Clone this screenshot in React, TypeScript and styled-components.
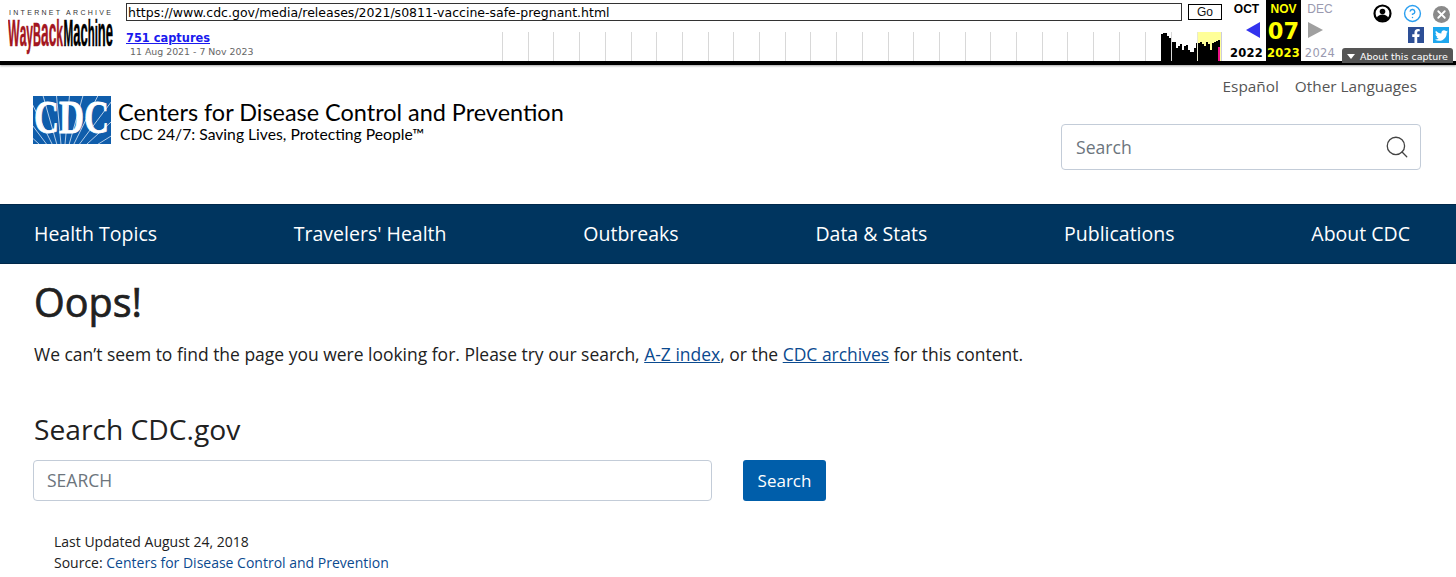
import styled, { createGlobalStyle } from 'styled-components';
import { Search as SearchIcon, X, HelpCircle } from 'lucide-react';
import { FaFacebookF, FaTwitter } from 'react-icons/fa';

const GlobalStyle = createGlobalStyle`
  html, body {
    margin: 0;
    padding: 0;
    background: #fff;
    overflow: hidden;
  }
  body {
    font-family: 'Open Sans', sans-serif;
    color: #212121;
  }
  * {
    box-sizing: border-box;
  }
`;

const Page = styled.div`
  width: 1456px;
  height: 577px;
  overflow: hidden;
`;

/* wayback toolbar */
const Toolbar = styled.div`
  position: relative;
  display: flex;
  height: 65px;
  background: #fff;
  border-bottom: 4px solid #000;
  box-shadow: 0 1px 2px rgba(0, 0, 0, 0.35);
  font-family: 'DejaVu Sans', sans-serif;
`;

const LogoLink = styled.div`
  width: 126px;
  flex: none;
  padding: 9px 0 0 8px;
`;

const Center = styled.div`
  width: 1101px;
  flex: none;
  display: flex;
  flex-direction: column;
  padding-top: 3px;
`;

const UrlRow = styled.div`
  display: flex;
  gap: 6px;
`;

const UrlInput = styled.div`
  width: 1056px;
  height: 18px;
  border: 1px solid #333;
  padding-left: 1px;
  font-size: 12.5px;
  line-height: 18px;
  color: #000;
  white-space: nowrap;
`;

const GoButton = styled.div`
  width: 34px;
  height: 16px;
  margin-top: 1px;
  border: 1px solid #000;
  font-family: 'Liberation Sans', sans-serif;
  font-size: 12px;
  line-height: 14px;
  text-align: center;
  color: #111;
`;

const CaptureRow = styled.div`
  display: flex;
`;

const CaptureInfo = styled.div`
  width: 376px;
  flex: none;
  padding-top: 10px;
`;

const CaptureLink = styled.a`
  display: block;
  font-size: 11.4px;
  font-weight: 700;
  line-height: 14px;
  color: #1a1aee;
  text-decoration: underline;
`;

const CaptureDates = styled.div`
  margin: 1px 0 0 4px;
  font-size: 9.4px;
  line-height: 12px;
  color: #666;
`;

const SparkWrap = styled.div`
  margin-top: 11px;
  line-height: 0;
`;

const Months = styled.div`
  display: flex;
  flex: none;
`;

const Month = styled.div<{ $width: number; $current?: boolean; $muted?: boolean }>`
  width: ${(p) => p.$width}px;
  height: 61px;
  display: flex;
  flex-direction: column;
  align-items: center;
  background: ${(p) => (p.$current ? '#000' : 'transparent')};
  color: ${(p) => (p.$current ? '#ff0' : p.$muted ? '#9a9ab0' : '#000')};
  font-family: 'Liberation Sans', sans-serif;
`;

const MonthName = styled.div<{ $weight?: number }>`
  height: 18px;
  padding-top: 1px;
  font-size: 12px;
  line-height: 16px;
  font-weight: ${(p) => p.$weight ?? 700};
`;

const Day = styled.div`
  height: 28px;
  font-family: 'DejaVu Sans', sans-serif;
  font-size: 22.5px;
  font-weight: 700;
  line-height: 26px;
`;

const Arrow = styled.div<{ $dir: 'left' | 'right' }>`
  width: 0;
  height: 0;
  margin-top: 4px;
  margin-bottom: 8px;
  margin-left: ${(p) => (p.$dir === 'left' ? '13px' : '0')};
  margin-right: ${(p) => (p.$dir === 'right' ? '9px' : '0')};
  border-top: 8px solid transparent;
  border-bottom: 8px solid transparent;
  ${(p) =>
    p.$dir === 'left'
      ? 'border-right: 14px solid #3333ee;'
      : 'border-left: 15px solid #a0a0a0;'}
`;

const Year = styled.div<{ $muted?: boolean }>`
  line-height: 14px;
  letter-spacing: 0.3px;
  font-weight: ${(p) => (p.$muted ? 400 : 700)};
  font-family: 'DejaVu Sans', sans-serif;
  font-size: 11.5px;
`;

const Tools = styled.div`
  flex: 1;
  display: flex;
  flex-direction: column;
  align-items: flex-end;
  padding: 4px 5px 0 0;
  gap: 4px;
`;

const ToolRow = styled.div`
  display: flex;
  align-items: center;
  gap: 10.5px;
`;

const RoundIcon = styled.div<{ $bg: string }>`
  width: 17px;
  height: 17px;
  margin: 2px 1px 0;
  border-radius: 50%;
  display: flex;
  align-items: center;
  justify-content: center;
  background: ${(p) => p.$bg};
  color: #fff;
`;

const PlainIcon = styled.div`
  width: 19px;
  height: 19px;
  display: flex;
  align-items: center;
  justify-content: center;
  color: #2b9ff0;
`;

const ShareRow = styled.div`
  display: flex;
  gap: 9px;
  margin-right: 2px;
`;

const ShareSquare = styled.div<{ $bg: string }>`
  width: 16px;
  height: 16px;
  display: flex;
  align-items: flex-end;
  justify-content: center;
  background: ${(p) => p.$bg};
  color: #fff;
`;

const ShareTwitter = styled(ShareSquare)`
  align-items: center;
`;

const AboutTab = styled.div`
  position: absolute;
  left: 1342px;
  top: 48px;
  width: 111px;
  height: 15px;
  display: flex;
  align-items: center;
  gap: 5px;
  padding: 1px 0 0 5px;
  border-radius: 3px 3px 0 0;
  background: #555;
  color: #fff;
  font-family: 'DejaVu Sans', sans-serif;
  font-size: 9.5px;
  white-space: nowrap;
`;

const AboutCaret = styled.span`
  width: 0;
  height: 0;
  border-left: 4px solid transparent;
  border-right: 4px solid transparent;
  border-top: 5px solid #fff;
`;

/* site header */
const Header = styled.header`
  height: 139px;
  padding: 31px 35px 0 33px;
  display: flex;
  justify-content: space-between;
`;

const Logo = styled.div`
  display: flex;
  gap: 7px;
`;

const LogoText = styled.div`
  padding-top: 3px;
  color: #000;
  font-family: 'Lato', sans-serif;
`;

const LogoTitle = styled.div`
  font-size: 23.45px;
  line-height: 26px;
  white-space: nowrap;
`;

const LogoTagline = styled.div`
  margin: 1px 0 0 2px;
  font-size: 15.7px;
  line-height: 17px;
  white-space: nowrap;
`;

const HeaderRight = styled.div`
  width: 360px;
  margin-top: -21px;
  display: flex;
  flex-direction: column;
`;

const LangLinks = styled.div`
  display: flex;
  justify-content: flex-end;
  gap: 16px;
  padding-right: 4px;
  font-size: 15.35px;
  line-height: 22px;
  color: #555;
`;

const SiteSearch = styled.div`
  height: 46px;
  margin-top: 27px;
  padding: 0 10px 0 14px;
  display: flex;
  align-items: center;
  justify-content: space-between;
  border: 1px solid #c3ccd8;
  border-radius: 4px;
  font-size: 17.6px;
  color: #6c757d;
  svg {
    color: #444;
  }
`;

/* nav */
const Nav = styled.nav`
  height: 60px;
  padding: 0 46px 2px 34px;
  display: flex;
  align-items: center;
  justify-content: space-between;
  background: #00355f;
  border-top: 1px solid #00284a;
  border-bottom: 1px solid #00284a;
  color: #fff;
  font-size: 19.5px;
`;

/* page content */
const Main = styled.main`
  padding: 14px 0 0 34px;
`;

const Title = styled.h1`
  margin: 0;
  font-size: 39.5px;
  font-weight: 500;
  line-height: 48px;
  color: #212121;
  -webkit-text-stroke: 0.7px #212121;
`;

const Lead = styled.p`
  margin: 15px 0 0;
  font-size: 17.48px;
  line-height: 26px;
  color: #212121;
`;

const TextLink = styled.a`
  color: #0b4a8f;
  text-decoration: underline;
`;

const SubTitle = styled.h2`
  margin: 44px 0 0;
  font-size: 28.2px;
  font-weight: 400;
  line-height: 36px;
  color: #212121;
`;

const SearchRow = styled.div`
  display: flex;
  gap: 31px;
  margin-top: 13px;
  margin-left: -1px;
`;

const SearchField = styled.div`
  width: 679px;
  height: 41px;
  padding-left: 13px;
  border: 1px solid #c3ccd8;
  border-radius: 4px;
  font-size: 17.5px;
  line-height: 39px;
  color: #6c757d;
`;

const SearchButton = styled.div`
  width: 83px;
  height: 41px;
  border-radius: 3px;
  background: #005eaa;
  color: #fff;
  font-size: 17px;
  line-height: 41px;
  text-align: center;
`;

const Meta = styled.div`
  margin: 30px 0 0 20px;
  font-size: 14px;
  line-height: 21px;
  color: #212121;
`;

const MetaLink = styled.a`
  color: #0b4a8f;
`;

// font sizes differ per letter so the lowercase fills the logo's tall block
const LogoWord = ({ parts, x, width, fill }: { parts: [string, number][]; x: number; width: number; fill: string }) => (
  <text
    x={x}
    y="37"
    fontFamily="Liberation Sans, sans-serif"
    fontWeight="700"
    fill={fill}
    stroke={fill}
    strokeWidth="0.5"
    textLength={width}
    lengthAdjust="spacingAndGlyphs"
  >
    {parts.map(([s, size], i) => (
      <tspan key={i} fontSize={size}>
        {s}
      </tspan>
    ))}
  </text>
);

const WaybackLogo = () => (
  <svg width="106" height="50" viewBox="0 0 106 50">
    <text
      x="1"
      y="6"
      fontFamily="Liberation Sans, sans-serif"
      fontSize="7"
      fill="#333"
      textLength="102"
    >
      INTERNET ARCHIVE
    </text>
    <LogoWord
      x={0}
      width={55}
      fill="#a31621"
      parts={[['W', 37], ['ay', 36], ['B', 33], ['ac', 41], ['k', 36]]}
    />
    <LogoWord
      x={55.5}
      width={49.5}
      fill="#000"
      parts={[['M', 37], ['ac', 41], ['hi', 36], ['ne', 41]]}
    />
  </svg>
);

const CdcLogo = () => {
  const rays = Array.from({ length: 16 }, (_, i) => {
    const a = Math.PI * (0.06 + (i * 0.88) / 15);
    return { x: 30 - Math.cos(a) * 110, y: 70 - Math.sin(a) * 110 };
  });
  return (
    <svg width="78" height="48" viewBox="0 0 78 48">
      <rect width="78" height="48" fill="#0f5dab" />
      {rays.map((r, i) => (
        <line key={i} x1="30" y1="70" x2={r.x} y2={r.y} stroke="#c4d9ef" strokeWidth="0.9" />
      ))}
      <text
        x="1"
        y="37"
        fontFamily="Liberation Serif, serif"
        fontWeight="700"
        fontSize="46"
        fill="#fff"
        stroke="#fff"
        strokeWidth="0.8"
        textLength="75"
        lengthAdjust="spacingAndGlyphs"
      >
        CDC
      </text>
    </svg>
  );
};

const SPARK_LEFT = 502;
const tickXs = Array.from({ length: 26 }, (_, i) => Math.round(SPARK_LEFT + i * 25.7));
const bars = [
  [1161, 34], [1163, 33], [1165, 33], [1167, 36], [1169, 38],
  [1172, 42], [1174, 42], [1176, 48], [1178, 46], [1180, 44], [1182, 50], [1184, 46],
  [1186, 45], [1188, 50], [1190, 52], [1192, 52], [1194, 48], [1196, 43],
  [1198, 43], [1200, 42], [1202, 44], [1204, 46], [1206, 42], [1208, 44], [1210, 50],
  [1212, 43], [1214, 42], [1216, 41], [1218, 40],
];

const Sparkline = () => (
  <svg width="722" height="29" viewBox="0 0 722 29">
    <rect x={1197 - SPARK_LEFT} y="0" width="25" height="29" fill="#ffff99" />
    {tickXs.map((x) => (
      <rect key={x} x={x - SPARK_LEFT} y="0" width="1" height="29" fill="#d8d8d8" />
    ))}
    {bars.map(([x, top]) => (
      <rect key={x} x={x - SPARK_LEFT} y={top - 32} width="2" height={61 - top} fill="#000" />
    ))}
    <rect x={1218 - SPARK_LEFT} y="15" width="2" height="14" fill="#ee1188" />
    <rect x={1171 - SPARK_LEFT} y="0" width="1" height="29" fill="#d8d8d8" />
    <rect x={1197 - SPARK_LEFT} y="0" width="1" height="29" fill="#e8e8d0" />
    <rect x={1221 - SPARK_LEFT} y="0" width="1" height="29" fill="#ccccdd" />
  </svg>
);

const App = () => (
  <Page>
    <GlobalStyle />
    <Toolbar>
      <LogoLink>
        <WaybackLogo />
      </LogoLink>
      <Center>
        <UrlRow>
          <UrlInput>https://www.cdc.gov/media/releases/2021/s0811-vaccine-safe-pregnant.html</UrlInput>
          <GoButton>Go</GoButton>
        </UrlRow>
        <CaptureRow>
          <CaptureInfo>
            <CaptureLink>751 captures</CaptureLink>
            <CaptureDates>11 Aug 2021 - 7 Nov 2023</CaptureDates>
          </CaptureInfo>
          <SparkWrap>
            <Sparkline />
          </SparkWrap>
        </CaptureRow>
      </Center>
      <Months>
        <Month $width={39}>
          <MonthName>OCT</MonthName>
          <Arrow $dir="left" />
          <Year>2022</Year>
        </Month>
        <Month $width={35} $current>
          <MonthName>NOV</MonthName>
          <Day>07</Day>
          <Year>2023</Year>
        </Month>
        <Month $width={38} $muted>
          <MonthName $weight={400}>DEC</MonthName>
          <Arrow $dir="right" />
          <Year $muted>2024</Year>
        </Month>
      </Months>
      <Tools>
        <ToolRow>
          <svg width="19" height="19" viewBox="0 0 19 19">
            <circle cx="9.5" cy="9.5" r="8" fill="#fff" stroke="#000" strokeWidth="2.2" />
            <circle cx="9.5" cy="7.5" r="2.8" fill="#000" />
            <path d="M3.5 14.5c1-3 3.5-4 6-4s5 1 6 4c-1.5 1.8-3.5 2.5-6 2.5s-4.5-.7-6-2.5z" fill="#000" />
          </svg>
          <PlainIcon>
            <HelpCircle size={19} strokeWidth={1.8} />
          </PlainIcon>
          <RoundIcon $bg="#8a8a8a">
            <X size={13} strokeWidth={3.4} />
          </RoundIcon>
        </ToolRow>
        <ShareRow>
          <ShareSquare $bg="#2d4f96">
            <FaFacebookF size={14} />
          </ShareSquare>
          <ShareTwitter $bg="#1ea7ee">
            <FaTwitter size={13} />
          </ShareTwitter>
        </ShareRow>
      </Tools>
      <AboutTab>
        <AboutCaret />
        About this capture
      </AboutTab>
    </Toolbar>

    <Header>
      <Logo>
        <CdcLogo />
        <LogoText>
          <LogoTitle>Centers for Disease Control and Prevention</LogoTitle>
          <LogoTagline>CDC 24/7: Saving Lives, Protecting People™</LogoTagline>
        </LogoText>
      </Logo>
      <HeaderRight>
        <LangLinks>
          <span>Español</span>
          <span>Other Languages</span>
        </LangLinks>
        <SiteSearch>
          Search
          <SearchIcon size={26} strokeWidth={1.2} />
        </SiteSearch>
      </HeaderRight>
    </Header>

    <Nav>
      <span>Health Topics</span>
      <span>Travelers' Health</span>
      <span>Outbreaks</span>
      <span>Data &amp; Stats</span>
      <span>Publications</span>
      <span>About CDC</span>
    </Nav>

    <Main>
      <Title>Oops!</Title>
      <Lead>
        We can’t seem to find the page you were looking for. Please try our search,{' '}
        <TextLink>A-Z index</TextLink>, or the <TextLink>CDC archives</TextLink> for this content.
      </Lead>
      <SubTitle>Search CDC.gov</SubTitle>
      <SearchRow>
        <SearchField>SEARCH</SearchField>
        <SearchButton>Search</SearchButton>
      </SearchRow>
      <Meta>
        <div>Last Updated August 24, 2018</div>
        <div>
          Source: <MetaLink>Centers for Disease Control and Prevention</MetaLink>
        </div>
      </Meta>
    </Main>
  </Page>
);

export default App;
